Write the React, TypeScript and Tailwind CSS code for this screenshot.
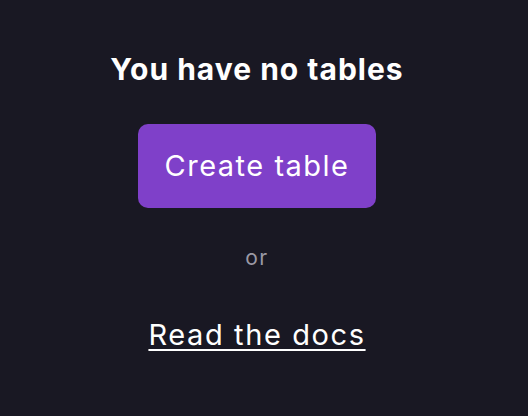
import React from 'react';

const App = () => {
  return (
    <div
      className="min-h-screen w-full bg-[#191823] flex flex-col items-center pt-[50px] pr-[14px]"
      style={{ fontFamily: 'Inter, "Noto Sans", sans-serif' }}
    >
      <h1 className="text-[30px] leading-[38px] font-bold tracking-[1px] text-white">You have no tables</h1>

      <button className="mt-[36px] h-[84px] w-[238px] rounded-[10px] bg-[#7f40c9] text-[29px] tracking-[1.5px] text-white">
        Create table
      </button>

      <p className="mt-[36px] text-[21px] leading-[28px] tracking-[1.5px] text-[#9b99a5]">or</p>

      <a
        href="#"
        className="mt-[45px] text-[29px] leading-[36px] tracking-[1.6px] text-white underline decoration-[2px] underline-offset-[4px]"
      >
        Read the docs
      </a>
    </div>
  );
};

export default App;
